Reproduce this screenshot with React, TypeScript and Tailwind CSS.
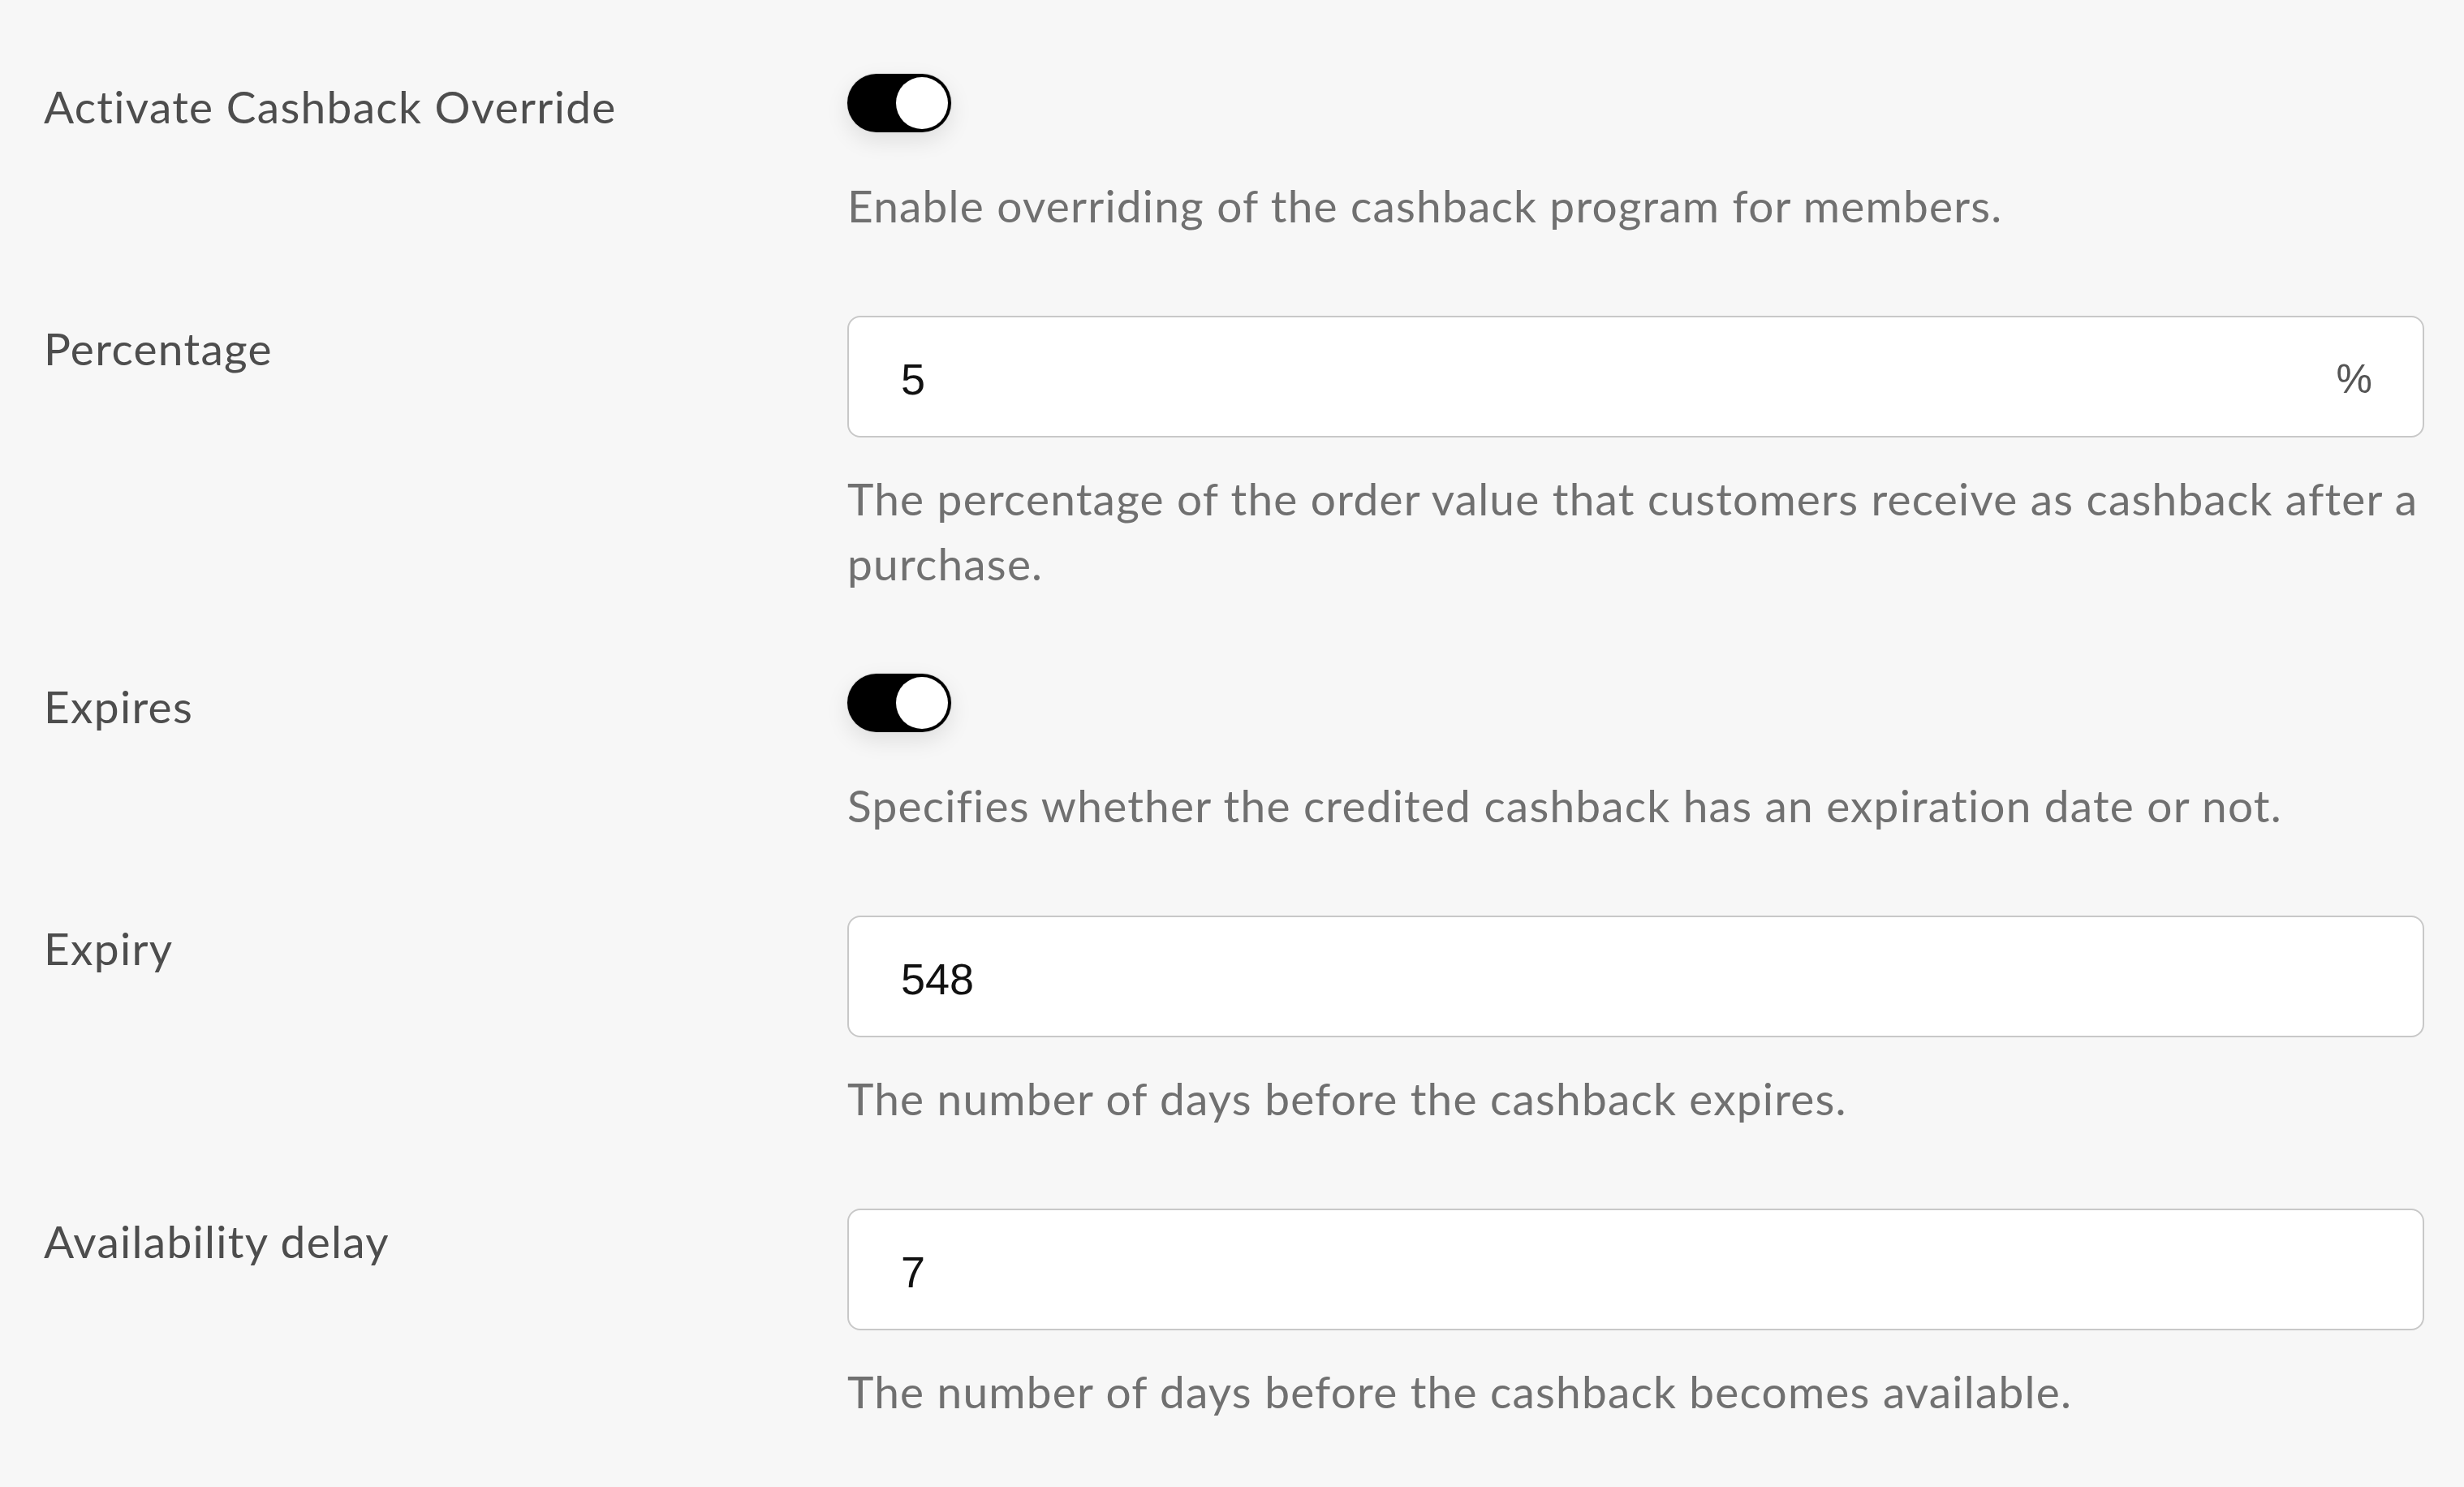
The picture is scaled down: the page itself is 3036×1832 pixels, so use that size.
const font = { fontFamily: "Lato, 'Open Sans', sans-serif" };

function Toggle() {
    return (
        <div className="h-[122px]">
            <div className="w-[128px] h-[72px] rounded-full bg-black p-[4px] flex justify-end shadow-[0_10px_28px_rgba(0,0,0,0.10)] ring-1 ring-[#dcdcdc]">
                <div className="w-[64px] h-[64px] rounded-full bg-white" />
            </div>
        </div>
    );
}

function Input({ value, suffix }: { value: string; suffix?: string }) {
    return (
        <div className="h-[150px] rounded-[16px] border-2 border-[#c8c8c8] bg-white flex items-center justify-between pl-[64px] pr-[62px] pt-[6px] mb-[35px]">
            <span className="text-[54px] text-[#111]" style={{ fontFamily: "'Liberation Sans', Arial, sans-serif" }}>{value}</span>
            {suffix && <span className="text-[50px] text-[#555]" style={{ fontFamily: "'Liberation Sans', Arial, sans-serif" }}>{suffix}</span>}
        </div>
    );
}

function Row({ label, desc, children }: { label: string; desc: string; children: React.ReactNode }) {
    return (
        <div className="flex items-start mb-[96px]">
            <div className="w-[990px] shrink-0 text-[55px] leading-[80px] tracking-[1.3px] text-[#4d4d4d]">{label}</div>
            <div className="flex-1">
                {children}
                <p className="text-[55px] leading-[80px] tracking-[1.2px] text-[#707070]">{desc}</p>
            </div>
        </div>
    );
}

export default function App() {
    return (
        <div className="min-h-screen bg-[#f7f7f7] pl-[54px] pr-[49px] pt-[91px]" style={font}>
            <Row label="Activate Cashback Override" desc="Enable overriding of the cashback program for members.">
                <Toggle />
            </Row>
            <Row label="Percentage" desc="The percentage of the order value that customers receive as cashback after a purchase.">
                <Input value="5" suffix="%" />
            </Row>
            <Row label="Expires" desc="Specifies whether the credited cashback has an expiration date or not.">
                <Toggle />
            </Row>
            <Row label="Expiry" desc="The number of days before the cashback expires.">
                <Input value="548" />
            </Row>
            <Row label="Availability delay" desc="The number of days before the cashback becomes available.">
                <Input value="7" />
            </Row>
        </div>
    );
}
